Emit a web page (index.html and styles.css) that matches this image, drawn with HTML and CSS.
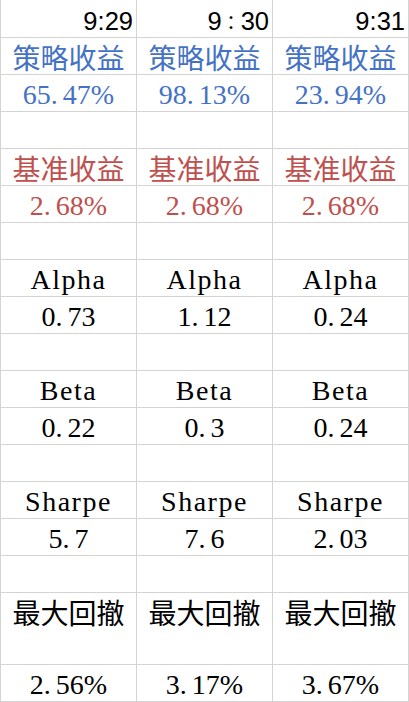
FILE: index.html
```html
<!DOCTYPE html>
<html lang="zh">
<head>
<meta charset="utf-8">
<title>策略指标</title>
<link rel="stylesheet" href="styles.css">
</head>
<body>
<div class="sheet">
  <div class="row row-time">
    <div class="cell time">9:29</div>
    <div class="cell time">9<span class="fwc">：</span>30</div>
    <div class="cell time">9:31</div>
  </div>
  <div class="row">
    <div class="cell cjk blue">策略收益</div>
    <div class="cell cjk blue">策略收益</div>
    <div class="cell cjk blue">策略收益</div>
  </div>
  <div class="row">
    <div class="cell num blue">65<span class="dot">.</span>47%</div>
    <div class="cell num blue">98<span class="dot">.</span>13%</div>
    <div class="cell num blue">23<span class="dot">.</span>94%</div>
  </div>
  <div class="row">
    <div class="cell"></div><div class="cell"></div><div class="cell"></div>
  </div>
  <div class="row">
    <div class="cell cjk red">基准收益</div>
    <div class="cell cjk red">基准收益</div>
    <div class="cell cjk red">基准收益</div>
  </div>
  <div class="row">
    <div class="cell num red">2<span class="dot">.</span>68%</div>
    <div class="cell num red">2<span class="dot">.</span>68%</div>
    <div class="cell num red">2<span class="dot">.</span>68%</div>
  </div>
  <div class="row">
    <div class="cell"></div><div class="cell"></div><div class="cell"></div>
  </div>
  <div class="row">
    <div class="cell num label">Alpha</div>
    <div class="cell num label">Alpha</div>
    <div class="cell num label">Alpha</div>
  </div>
  <div class="row">
    <div class="cell num">0<span class="dot">.</span>73</div>
    <div class="cell num">1<span class="dot">.</span>12</div>
    <div class="cell num">0<span class="dot">.</span>24</div>
  </div>
  <div class="row">
    <div class="cell"></div><div class="cell"></div><div class="cell"></div>
  </div>
  <div class="row">
    <div class="cell num label">Beta</div>
    <div class="cell num label">Beta</div>
    <div class="cell num label">Beta</div>
  </div>
  <div class="row">
    <div class="cell num">0<span class="dot">.</span>22</div>
    <div class="cell num">0<span class="dot">.</span>3</div>
    <div class="cell num">0<span class="dot">.</span>24</div>
  </div>
  <div class="row">
    <div class="cell"></div><div class="cell"></div><div class="cell"></div>
  </div>
  <div class="row">
    <div class="cell num label">Sharpe</div>
    <div class="cell num label">Sharpe</div>
    <div class="cell num label">Sharpe</div>
  </div>
  <div class="row">
    <div class="cell num">5<span class="dot">.</span>7</div>
    <div class="cell num">7<span class="dot">.</span>6</div>
    <div class="cell num">2<span class="dot">.</span>03</div>
  </div>
  <div class="row">
    <div class="cell"></div><div class="cell"></div><div class="cell"></div>
  </div>
  <div class="row row-tall">
    <div class="cell cjk">最大回撤</div>
    <div class="cell cjk">最大回撤</div>
    <div class="cell cjk">最大回撤</div>
  </div>
  <div class="row">
    <div class="cell num">2<span class="dot">.</span>56%</div>
    <div class="cell num">3<span class="dot">.</span>17%</div>
    <div class="cell num">3<span class="dot">.</span>67%</div>
  </div>
</div>
</body>
</html>
```
FILE: styles.css
```css
* { box-sizing: border-box; }

html, body {
  margin: 0;
  padding: 0;
  background: #ffffff;
}

.sheet {
  width: 409px;
  border-left: 1px solid #d4d4d4;
  color: #000000;
}

.row {
  display: flex;
  height: 37px;
  border-bottom: 1px solid #d4d4d4;
}

.row-time { height: 38px; }
.row-tall { height: 72px; }

.cell {
  width: 136px;
  flex: 0 0 136px;
  border-right: 1px solid #d4d4d4;
  white-space: nowrap;
}

.time {
  font-family: "Liberation Sans", Arial, sans-serif;
  font-size: 25.5px;
  line-height: 36px;
  padding: 3px 3px 0 0;
  text-align: right;
}

.fwc {
  font-family: "Noto Sans CJK JP", sans-serif;
  font-size: 19px;
}

.cjk {
  font-family: "Noto Sans CJK SC", sans-serif;
  font-size: 28px;
  line-height: 36px;
  padding-top: 1px;
  text-align: center;
}

.num {
  font-family: "Liberation Serif", "Times New Roman", "DejaVu Serif", serif;
  font-size: 28px;
  line-height: 36px;
  padding-top: 2px;
  text-align: center;
}

.label { letter-spacing: 1.5px; }

.dot { margin-right: 5px; }

.blue { color: #4472c4; }
.red { color: #c0504d; }
```
